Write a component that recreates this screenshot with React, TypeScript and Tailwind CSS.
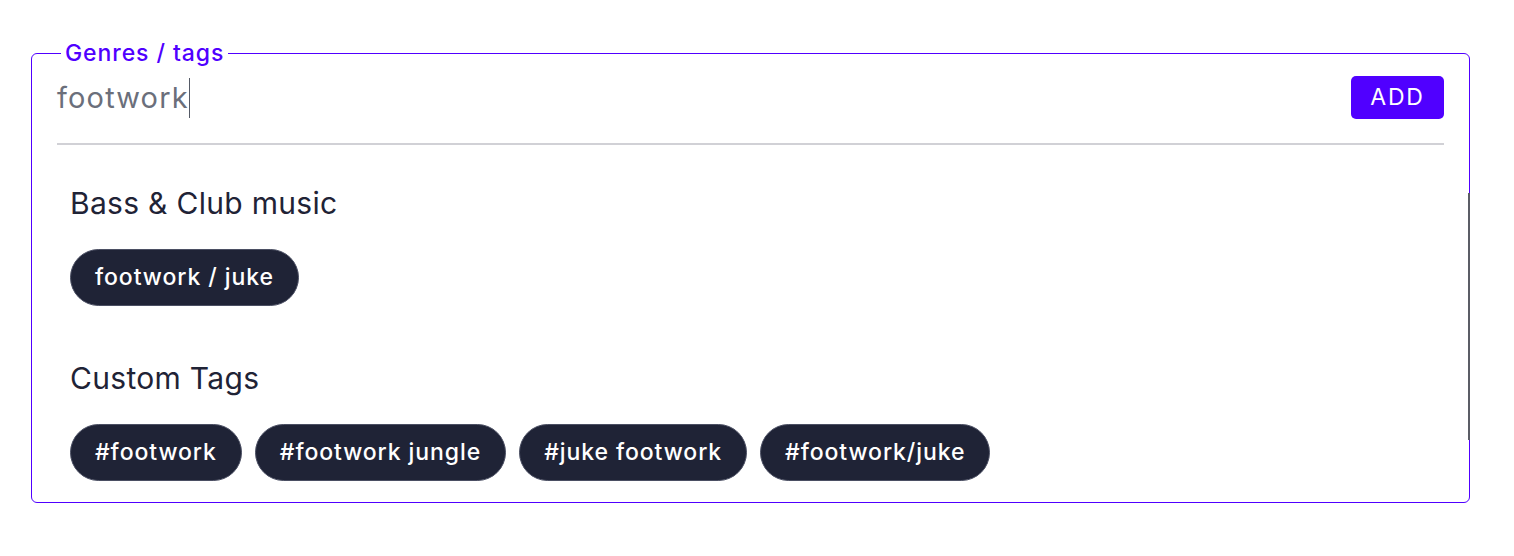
import React from 'react';

const groups = [
  { title: 'Bass & Club music', tags: ['footwork / juke'] },
  { title: 'Custom Tags', tags: ['#footwork', '#footwork jungle', '#juke footwork', '#footwork/juke'] },
];

const Tag = ({ label }: { label: string }) => (
  <button
    type="button"
    className="h-[57px] px-[24px] rounded-full bg-[#1f2336] border border-[#4b4f63] text-white text-[23px] tracking-[0.04em] font-medium leading-none"
  >
    {label}
  </button>
);

export default function App() {
  return (
    <div className="min-h-screen bg-white pt-[39px] pl-[31px] font-['Inter',sans-serif]">
      <fieldset className="relative w-[1439px] border border-[#5000ff] rounded-md">
        <legend className="ml-[29px] px-1 text-[23px] tracking-[0.04em] leading-[28px] font-medium text-[#5000ff]">
          Genres / tags
        </legend>

        <div className="mx-[25px] mt-[9px] pb-[23px] border-b-2 border-[#d1d1d6] flex items-center justify-between">
          <div className="flex items-center text-[29px] tracking-[0.04em] text-[#6b6f7b]">
            <span>footwork</span>
            <span className="w-px h-[40px] bg-[#555a66]" />
          </div>
          <button
            type="button"
            className="h-[43px] w-[93px] rounded-[5px] bg-[#5000ff] text-white text-[23px] tracking-[0.08em] leading-none"
          >
            ADD
          </button>
        </div>

        <div className="px-[38px] pt-[41px] pb-[21px] flex flex-col">
          {groups.map((g, i) => (
            <div key={g.title} className={i > 0 ? 'mt-[55px]' : ''}>
              <h3 className="text-[30px] tracking-[0.01em] leading-[34px] font-normal text-[#1f2336]">{g.title}</h3>
              <div className="mt-[29px] flex flex-wrap gap-[13px]">
                {g.tags.map((t) => (
                  <Tag key={t} label={t} />
                ))}
              </div>
            </div>
          ))}
        </div>

        {/* scrollbar sliver on the right edge */}
        <div className="absolute -right-px top-[126px] w-[2px] h-[247px] bg-[#5b5d66]" />
      </fieldset>
    </div>
  );
}
